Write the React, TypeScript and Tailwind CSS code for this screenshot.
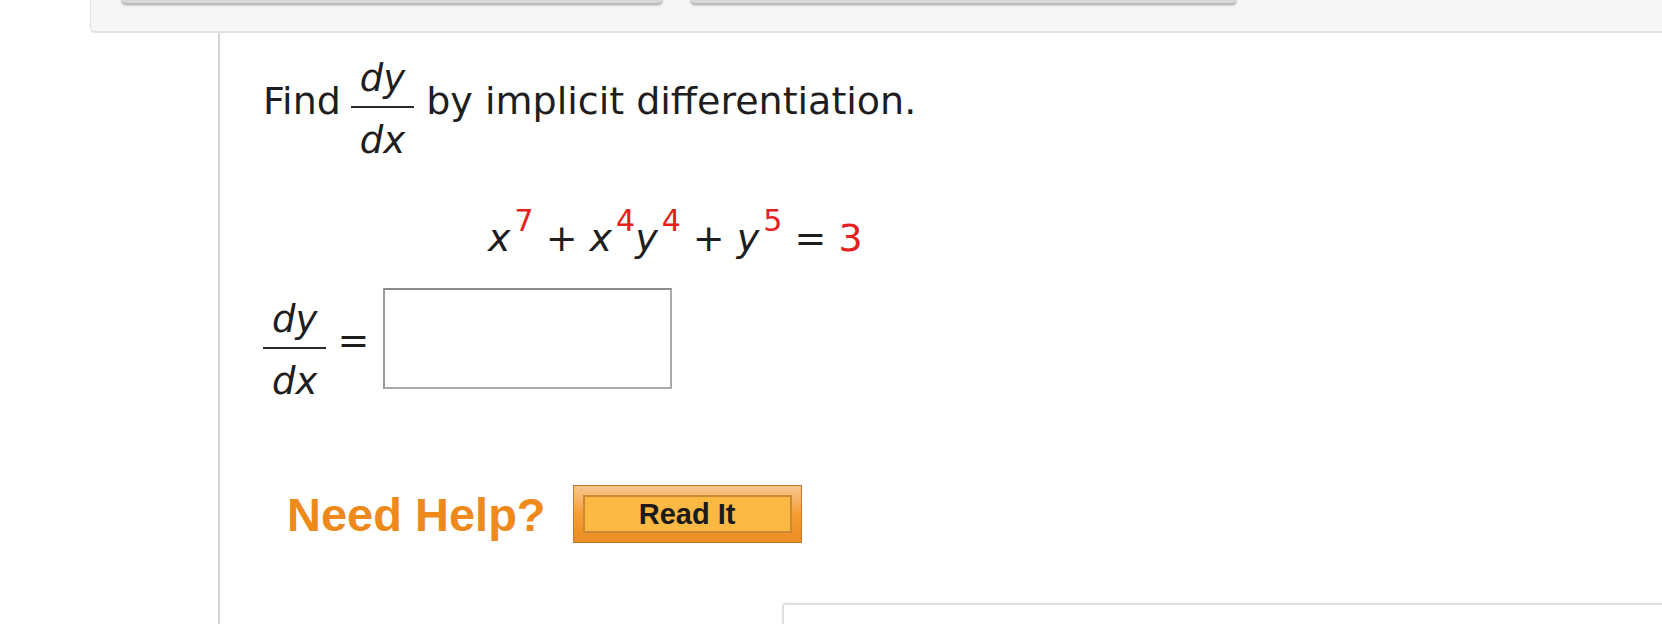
import type { ReactNode } from "react";

// fraction: numerator box, rule, denominator box
const Frac = ({ top, bottom }: { top: ReactNode; bottom: ReactNode }) => (
  <span className="inline-flex flex-col items-stretch text-[37px] italic">
    <span className="h-[54px] px-[9px] text-center leading-[54px]">{top}</span>
    <span className="h-[2px] bg-[#2a2a2a]" />
    <span className="h-[66px] px-[9px] text-center leading-[66px]">{bottom}</span>
  </span>
);

const Sup = ({ children }: { children: ReactNode }) => (
  <span className="ml-[4px] align-[20px] text-[30px] not-italic leading-none text-[#e4211c]">
    {children}
  </span>
);

export default function App() {
  return (
    <div className="h-[624px] w-[1662px] overflow-hidden bg-white font-['DejaVu_Sans',sans-serif] text-[#1e1e1e]">
      {/* toolbar strip cut off at the top */}
      <div className="ml-[90px] flex h-[33px] gap-[27px] rounded-bl-[5px] border-b-2 border-l border-[#e2e2e2] bg-[#f6f6f6] pl-[30px]">
        <div className="h-[5px] w-[542px] rounded-b-[6px] border-b-2 border-[#bcbcbc] bg-[#d8d8d8] shadow-[0_1px_2px_rgba(0,0,0,0.15)]" />
        <div className="h-[5px] w-[547px] rounded-b-[6px] border-b-2 border-[#bcbcbc] bg-[#d8d8d8] shadow-[0_1px_2px_rgba(0,0,0,0.15)]" />
      </div>

      <div className="ml-[218px] h-[591px] border-l-2 border-[#d6d6d6] pl-[43px]">
        {/* question */}
        <div className="flex items-start pt-[19px] text-[38px] leading-none">
          <span className="mt-[30px]">Find</span>
          <span className="ml-[10px] mr-[12px]">
            <Frac top="dy" bottom="dx" />
          </span>
          <span className="mt-[30px]">by implicit differentiation.</span>
        </div>

        {/* equation */}
        <div className="ml-[225px] mt-[29px] h-[70px] whitespace-pre text-[38px] leading-[70px]">
          <i>x</i>
          <Sup>7</Sup>
          {" + "}
          <i>x</i>
          <Sup>4</Sup>
          <i>y</i>
          <Sup>4</Sup>
          {" + "}
          <i>y</i>
          <Sup>5</Sup>
          {" = "}
          <span className="text-[#e4211c]">3</span>
        </div>

        {/* answer */}
        <div className="mt-[15px] flex items-start">
          <span className="mt-[5px]">
            <Frac top="dy" bottom="dx" />
          </span>
          <span className="ml-[11px] mr-[14px] mt-[33px] text-[38px] leading-none">=</span>
          <input
            type="text"
            className="h-[101px] w-[289px] border-2 border-[#aaaaaa] border-t-[#8c8c8c] border-l-[#9a9a9a] bg-white outline-none"
          />
        </div>

        {/* help */}
        <div className="ml-[24px] mt-[70px] flex items-center gap-[27px]">
          <span className="font-['Liberation_Sans',sans-serif] text-[47px] font-bold leading-none text-[#ee8a1c]">
            Need Help?
          </span>
          <button
            type="button"
            className="h-[58px] w-[229px] border border-[#c4762a] bg-gradient-to-b from-[#f8c58e] via-[#f59d30] to-[#ec8c25] p-[9px]"
          >
            <span className="flex h-full w-full items-center justify-center border-2 border-[#c98a35] bg-[#fbb944] font-['Liberation_Sans',sans-serif] text-[29px] font-bold leading-none text-[#1a1a1a]">
              Read It
            </span>
          </button>
        </div>

        {/* next panel peeking in */}
        <div className="ml-[519px] mt-[60px] h-[40px] rounded-tl-[3px] border-l-2 border-t-2 border-[#e0e0e0] shadow-[0_-1px_2px_rgba(0,0,0,0.05)]" />
      </div>
    </div>
  );
}
